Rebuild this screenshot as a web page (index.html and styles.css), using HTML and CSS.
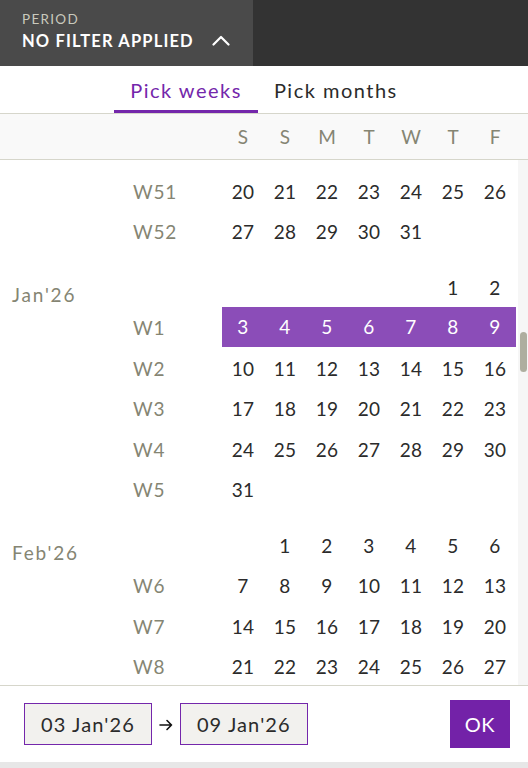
FILE: index.html
```html
<!DOCTYPE html>
<html lang="en">
<head>
<meta charset="utf-8">
<title>Period picker</title>
<link rel="stylesheet" href="styles.css">
</head>
<body>
<div class="app">
  <header class="topbar">
    <div class="filter">
      <div class="filter-label">PERIOD</div>
      <div class="filter-value">NO FILTER APPLIED
        <svg class="chev" width="18" height="11" viewBox="0 0 18 11"><polyline points="1.5,9.5 9,2 16.5,9.5" fill="none" stroke="#fff" stroke-width="2.2" stroke-linecap="round" stroke-linejoin="round"/></svg>
      </div>
    </div>
    <div class="topbar-rest"></div>
  </header>

  <nav class="tabs">
    <div class="tab active">Pick weeks</div>
    <div class="tab">Pick months</div>
  </nav>

  <div class="dow">
    <span>S</span><span>S</span><span>M</span><span>T</span><span>W</span><span>T</span><span>F</span>
  </div>

  <div class="body">
    <div class="cal">
      <section class="month first">
        <div class="row"><span class="mlabel"></span><span class="wk">W51</span><span class="d">20</span><span class="d">21</span><span class="d">22</span><span class="d">23</span><span class="d">24</span><span class="d">25</span><span class="d">26</span></div>
        <div class="row"><span class="mlabel"></span><span class="wk">W52</span><span class="d">27</span><span class="d">28</span><span class="d">29</span><span class="d">30</span><span class="d">31</span><span class="d"></span><span class="d"></span></div>
      </section>

      <section class="month">
        <div class="row"><span class="mlabel">Jan'26</span><span class="wk"></span><span class="d"></span><span class="d"></span><span class="d"></span><span class="d"></span><span class="d"></span><span class="d">1</span><span class="d">2</span></div>
        <div class="row sel"><span class="mlabel"></span><span class="wk">W1</span><span class="d">3</span><span class="d">4</span><span class="d">5</span><span class="d">6</span><span class="d">7</span><span class="d">8</span><span class="d">9</span></div>
        <div class="row"><span class="mlabel"></span><span class="wk">W2</span><span class="d">10</span><span class="d">11</span><span class="d">12</span><span class="d">13</span><span class="d">14</span><span class="d">15</span><span class="d">16</span></div>
        <div class="row"><span class="mlabel"></span><span class="wk">W3</span><span class="d">17</span><span class="d">18</span><span class="d">19</span><span class="d">20</span><span class="d">21</span><span class="d">22</span><span class="d">23</span></div>
        <div class="row"><span class="mlabel"></span><span class="wk">W4</span><span class="d">24</span><span class="d">25</span><span class="d">26</span><span class="d">27</span><span class="d">28</span><span class="d">29</span><span class="d">30</span></div>
        <div class="row"><span class="mlabel"></span><span class="wk">W5</span><span class="d">31</span><span class="d"></span><span class="d"></span><span class="d"></span><span class="d"></span><span class="d"></span><span class="d"></span></div>
      </section>

      <section class="month">
        <div class="row"><span class="mlabel">Feb'26</span><span class="wk"></span><span class="d"></span><span class="d">1</span><span class="d">2</span><span class="d">3</span><span class="d">4</span><span class="d">5</span><span class="d">6</span></div>
        <div class="row"><span class="mlabel"></span><span class="wk">W6</span><span class="d">7</span><span class="d">8</span><span class="d">9</span><span class="d">10</span><span class="d">11</span><span class="d">12</span><span class="d">13</span></div>
        <div class="row"><span class="mlabel"></span><span class="wk">W7</span><span class="d">14</span><span class="d">15</span><span class="d">16</span><span class="d">17</span><span class="d">18</span><span class="d">19</span><span class="d">20</span></div>
        <div class="row"><span class="mlabel"></span><span class="wk">W8</span><span class="d">21</span><span class="d">22</span><span class="d">23</span><span class="d">24</span><span class="d">25</span><span class="d">26</span><span class="d">27</span></div>
      </section>
    </div>
    <div class="scrollbar"><div class="thumb"></div></div>
  </div>

  <footer class="footer">
    <div class="range">
      <div class="datebox">03 Jan'26</div>
      <svg class="arrow" width="14" height="12" viewBox="0 0 14 12"><path d="M1 6 H12.5 M8 1.5 L12.5 6 L8 10.5" fill="none" stroke="#111" stroke-width="1.6" stroke-linecap="round" stroke-linejoin="round"/></svg>
      <div class="datebox">09 Jan'26</div>
    </div>
    <button class="ok">OK</button>
  </footer>
</div>
</body>
</html>
```

FILE: styles.css
```css
* { box-sizing: border-box; }
html, body { margin: 0; padding: 0; }
body {
  background: #e7e7e7;
  font-family: Lato, "Noto Sans", sans-serif;
  color: #2b2b2b;
}
.app {
  width: 528px;
  height: 762px;
  background: #fff;
  display: flex;
  flex-direction: column;
}

/* top bar */
.topbar {
  height: 66px;
  display: flex;
  background: #333333;
}
.filter {
  width: 253px;
  background: #4a4a4a;
  padding: 11px 0 0 22px;
}
.filter-label {
  font-size: 13.5px;
  color: #c9c9bd;
  letter-spacing: 1.3px;
  line-height: 16px;
}
.filter-value {
  margin-top: 4px;
  font-size: 16.5px;
  font-weight: 700;
  color: #fff;
  letter-spacing: 1.15px;
  display: flex;
  align-items: center;
  line-height: 20px;
}
.chev { margin-left: 18px; margin-top: -2px; }
.topbar-rest { flex: 1; }

/* tabs */
.tabs {
  height: 48px;
  display: flex;
  justify-content: center;
  border-bottom: 1px solid #d6d6cb;
}
.tab {
  padding: 12px 16px 0;
  font-size: 20px;
  letter-spacing: 1.5px;
  color: #2b2b2b;
  border-bottom: 3px solid transparent;
}
.tab.active {
  color: #7427ab;
  border-bottom-color: #7427ab;
}

/* day of week header */
.dow {
  height: 46px;
  background: #f9f9f9;
  border-bottom: 1px solid #d6d6cb;
  display: grid;
  grid-template-columns: 222px repeat(7, 42px);
  align-items: center;
  font-size: 19px;
  color: #858573;
}
.dow span { text-align: center; }
.dow span:first-child { grid-column: 2; }

/* calendar body */
.body {
  flex: 1;
  display: flex;
  overflow: hidden;
  border-bottom: 1px solid #d6d6cb;
}
.cal {
  width: 518px;
  padding-top: 11px;
  overflow: hidden;
}
.month { margin-top: 15px; }
.month.first { margin-top: 0; }
.row {
  height: 40.5px;
  display: grid;
  grid-template-columns: 133px 89px repeat(7, 42px);
  align-items: center;
  font-size: 19px;
  letter-spacing: 0.3px;
}
.mlabel {
  padding-left: 12px;
  padding-top: 14px;
  color: #858573;
  letter-spacing: 1.8px;
}
.wk { color: #858573; letter-spacing: 0.8px; }
.d {
  color: #2b2b2b;
  height: 100%;
  display: flex;
  align-items: center;
  justify-content: center;
}
.row.sel .d {
  background: #8b4db8;
  color: #fff;
  height: 40px;
  margin-top: -2px;
}

.scrollbar {
  width: 10px;
  background: #f6f6f6;
  padding: 172px 1px 0 2px;
}
.thumb {
  height: 40px;
  background: #aeae9f;
  border-radius: 4px;
}

/* footer */
.footer {
  height: 76px;
  display: flex;
  align-items: center;
  justify-content: space-between;
  padding: 0 18px 0 24px;
}
.range {
  display: flex;
  align-items: center;
}
.datebox {
  height: 42px;
  padding: 0 16px;
  display: flex;
  align-items: center;
  background: #f2f1ee;
  border: 1px solid #7427ab;
  font-size: 20px;
  letter-spacing: 1.1px;
  color: #2b2b2b;
}
.arrow { margin: 2px 7px 0 7px; }
.ok {
  width: 60px;
  height: 48px;
  background: #7322a8;
  color: #fff;
  border: none;
  font-family: inherit;
  font-size: 20px;
  letter-spacing: 0.5px;
  padding: 0;
  margin-top: -1px;
}
```
